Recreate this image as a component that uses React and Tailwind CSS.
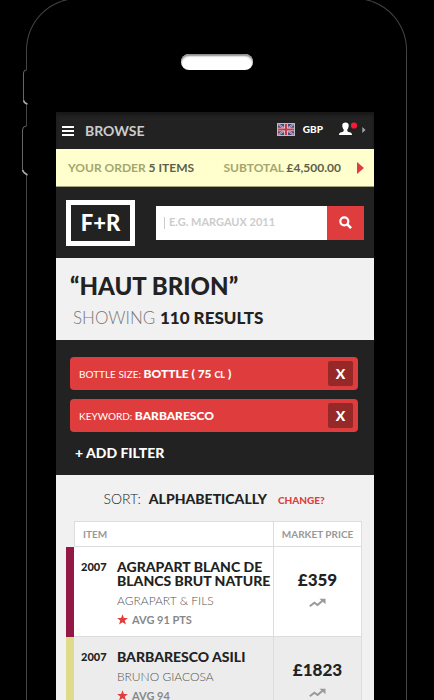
import React from "react";

const filters = [
  { label: "BOTTLE SIZE:", value: <>BOTTLE ( 75 <span className="text-[9px]">CL</span> )</>, name: "bottle size" },
  { label: "KEYWORD:", value: "BARBARESCO", name: "keyword" },
];

const wines = [
  {
    year: "2007",
    name: "AGRAPART BLANC DE BLANCS BRUT NATURE",
    maker: "AGRAPART & FILS",
    score: "AVG 91 PTS",
    price: "£359",
    stripe: "bg-[#931944]",
    row: "bg-white",
  },
  {
    year: "2007",
    name: "BARBARESCO ASILI",
    maker: "BRUNO GIACOSA",
    score: "AVG 94",
    price: "£1823",
    stripe: "bg-[#dfdb8a]",
    row: "bg-[#ececec]",
  },
];

function Flag() {
  return (
    <svg width="18" height="13" viewBox="0 0 18 13" aria-hidden="true">
      <rect width="18" height="13" fill="#b9bccb" />
      <rect x="1" y="1" width="16" height="11" fill="#3c4a80" />
      <path d="M1 1l16 11M17 1L1 12" stroke="#c5c4d0" strokeWidth="2" />
      <path d="M1 1l16 11M17 1L1 12" stroke="#b8455a" strokeWidth="0.8" />
      <path d="M9 1v11M1 6.5h16" stroke="#dcd9e0" strokeWidth="3.6" />
      <path d="M9 1v11M1 6.5h16" stroke="#c23a4c" strokeWidth="2" />
    </svg>
  );
}

function Person() {
  return (
    <svg width="27" height="14" viewBox="0 0 27 14" aria-hidden="true">
      <path
        d="M6.500.5C8.500.5 9.700 1.500 9.700 3.300c0 1.800-.5 3.300-1.400 4.300v1.300c.3.9 2.100 1.200 3.300 1.700 1 .5 1.400 1.100 1.400 2.400H0c0-1.300.4-1.900 1.400-2.400 1.200-.5 3-.8 3.300-1.700V7.600C3.800 6.600 3.300 5.100 3.300 3.300 3.300 1.500 4.500.5 6.500.5z"
        fill="#fff"
      />
      <circle cx="15" cy="3.500" r="3.100" fill="#fb1838" />
      <path d="M23.300 5v6l3.200-3z" fill="#a5a5a5" />
    </svg>
  );
}

function Trend() {
  return (
    <svg width="17" height="10" viewBox="0 0 17 10" className="mx-auto block" aria-hidden="true">
      <path d="M.8 8.300L5.400 4.800 8.600 7 14 2.300" fill="none" stroke="#999" strokeWidth="2" />
      <path d="M10.500.8h6v5.400z" fill="#999" />
    </svg>
  );
}

function Star() {
  return (
    <svg width="11" height="11" viewBox="0 0 11 11" aria-hidden="true">
      <path d="M5.500.2l1.400 3.700 4 .2-3.100 2.500 1.100 3.900-3.400-2.200-3.400 2.200 1.100-3.900L.1 4.100l4-.2z" fill="#e03e3e" />
    </svg>
  );
}

function PhoneShell({ children }) {
  return (
    <div className="relative -mt-0.5 mr-[27px] ml-[26px] rounded-t-[52px] border-x border-t border-[#444] pt-[55px] pr-8 pl-[29px]">
      <svg className="absolute top-[70px] -left-[6px]" width="7" height="108" viewBox="0 0 7 108" fill="none" aria-hidden="true">
        <path d="M5.500 1v34M5.500 57v48" stroke="#000" />
        <path d="M5.500 1Q2.500 1 2.500 4v27q0 3 3 4" stroke="#666" />
        <path d="M5.500 57Q1.500 57 1.500 61v39q0 4 4 5" stroke="#666" />
        <path d="M2.500 31.500q1 3 4 3.500M1.500 101q1 3 5 5" stroke="#aaa" strokeWidth="1.500" />
      </svg>
      <div className="mb-[42px] flex justify-center pl-[3px]">
        <div className="h-4 w-[72px] rounded-full bg-white shadow-[inset_0_2px_2px_#888]" />
      </div>
      {children}
    </div>
  );
}

export default function App() {
  return (
    <div className="h-screen overflow-hidden bg-black font-['Lato','Noto_Sans',sans-serif] text-[#222]">
      <PhoneShell>
        <main className="bg-[#222]">
          <header className="flex h-[37px] items-center px-1.5 shadow-[inset_0_3px_3px_#181818]">
            <button className="flex items-center gap-[11px] text-sm font-bold text-[#ccc]">
              <svg width="12" height="10" viewBox="0 0 12 10" aria-hidden="true">
                <path d="M0 1h12M0 5h12M0 9h12" stroke="#fff" strokeWidth="2" />
              </svg>
              BROWSE
            </button>
            <button className="ml-auto flex items-center gap-2 pb-0.5 text-[10px] font-black text-white">
              <Flag />
              GBP
            </button>
            <button aria-label="Account" className="mr-0.5 ml-4 pb-1">
              <Person />
            </button>
          </header>

          <a
            href="#order"
            className="flex h-[38px] items-center border-b border-[#a3a37e] bg-[#feffcd] pr-[10px] pl-3 text-xs font-bold whitespace-nowrap text-[#a5a66f]"
          >
            <span>YOUR ORDER <span className="text-[#5f604a]">5 ITEMS</span></span>
            <span className="ml-auto">SUBTOTAL <span className="text-[#5f604a]">£4,500.00</span></span>
            <svg className="ml-4" width="7" height="12" viewBox="0 0 7 12" aria-hidden="true">
              <path d="M0 0l7 6-7 6z" fill="#e03e3e" />
            </svg>
          </a>

          <div className="flex h-[71px] items-center gap-[21px] px-[10px]">
            <a href="#home" className="flex h-[46px] w-[69px] shrink-0 items-center justify-center border-5 border-white text-[22px] font-black text-white">
              F+R
            </a>
            <form className="flex h-[34px] min-w-0 flex-1" onSubmit={(e) => e.preventDefault()}>
              <div className="flex min-w-0 flex-1 items-center bg-white pl-2">
                <span className="h-3 w-px bg-[#ccc]" />
                <input
                  type="search"
                  aria-label="Search wines"
                  placeholder="E.G. MARGAUX 2011"
                  className="w-full min-w-0 pl-1 text-[11px] font-bold outline-none placeholder:text-[#ccc]"
                />
              </div>
              <button aria-label="Search" className="flex w-[37px] items-center justify-center bg-[#df3d3d]">
                <svg width="13" height="13" viewBox="0 0 13 13" fill="none" stroke="#fff" aria-hidden="true">
                  <circle cx="5.300" cy="5.300" r="4" strokeWidth="2.200" />
                  <path d="M8.300 8.300l3.800 3.800" strokeWidth="2.600" />
                </svg>
              </button>
            </form>
          </div>

          <section className="h-[82px] bg-[#f1f1f1] px-[14px] pt-3">
            <h1 className="text-2xl leading-8 font-black">“HAUT BRION”</h1>
            <p className="pl-[3px] text-[17px] leading-8 font-light text-[#777]">
              SHOWING <strong className="font-black text-[#222]">110 RESULTS</strong>
            </p>
          </section>

          <section className="flex h-[135px] flex-col gap-[9px] pt-[17px] pr-4 pl-[14px] text-white">
            {filters.map((f) => (
              <div key={f.name} className="flex h-[33px] items-center rounded bg-[#df3d3d] pr-[5px] pl-[9px]">
                <span className="text-[10px]">
                  {f.label} <strong className="text-xs font-black">{f.value}</strong>
                </span>
                <button aria-label={`Remove ${f.name}`} className="ml-auto size-[25px] rounded-xs bg-[#962828] text-sm leading-6 font-black">
                  X
                </button>
              </div>
            ))}
            <button className="mt-0.5 self-start pl-[5px] text-sm leading-5 font-black">+ ADD FILTER</button>
          </section>

          <section className="bg-[#f1f1f1] pt-[14px] pr-3 pb-10 pl-[10px]">
            <div className="mb-3 flex items-baseline justify-center text-sm leading-5">
              <span className="font-light text-[#222]">SORT:</span>
              <strong className="mr-[11px] ml-2 font-black">ALPHABETICALLY</strong>
              <button className="text-[10px] leading-4 font-black text-[#df3d3d]">CHANGE?</button>
            </div>
            <table className="w-full table-fixed border-separate border-spacing-0">
              <colgroup>
                <col className="w-2" />
                <col />
                <col className="w-[88px]" />
              </colgroup>
              <thead>
                <tr className="h-[26px] text-[10px] text-[#999]">
                  <td />
                  <th scope="col" className="border border-[#ddd] bg-white pl-2 text-left font-bold">ITEM</th>
                  <th scope="col" className="border-y border-r border-[#ddd] bg-white font-bold whitespace-nowrap">MARKET PRICE</th>
                </tr>
              </thead>
              <tbody>
                {wines.map((w) => (
                  <tr key={w.name} className={`h-[90px] align-top ${w.row}`}>
                    <td className={w.stripe} />
                    <td className="border-r border-b border-[#ddd] pt-[13px] pl-[7px]">
                      <div className="flex">
                        <span className="w-9 shrink-0 text-[11px] leading-[14px] font-black">{w.year}</span>
                        <div>
                          <h2 className="text-sm leading-[14px] font-black">{w.name}</h2>
                          <p className="mt-1 text-xs leading-[18px] font-light text-[#555]">{w.maker}</p>
                          <p className="mt-1 flex items-center gap-1 text-[11px] leading-[10px] font-bold text-[#888]">
                            <Star />
                            {w.score}
                          </p>
                        </div>
                      </div>
                    </td>
                    <td className="border-r border-b border-[#ddd] pt-[23px] text-center">
                      <span className="mb-2 block text-[17px] leading-5 font-black">{w.price}</span>
                      <Trend />
                    </td>
                  </tr>
                ))}
              </tbody>
            </table>
          </section>
        </main>
      </PhoneShell>
    </div>
  );
}
